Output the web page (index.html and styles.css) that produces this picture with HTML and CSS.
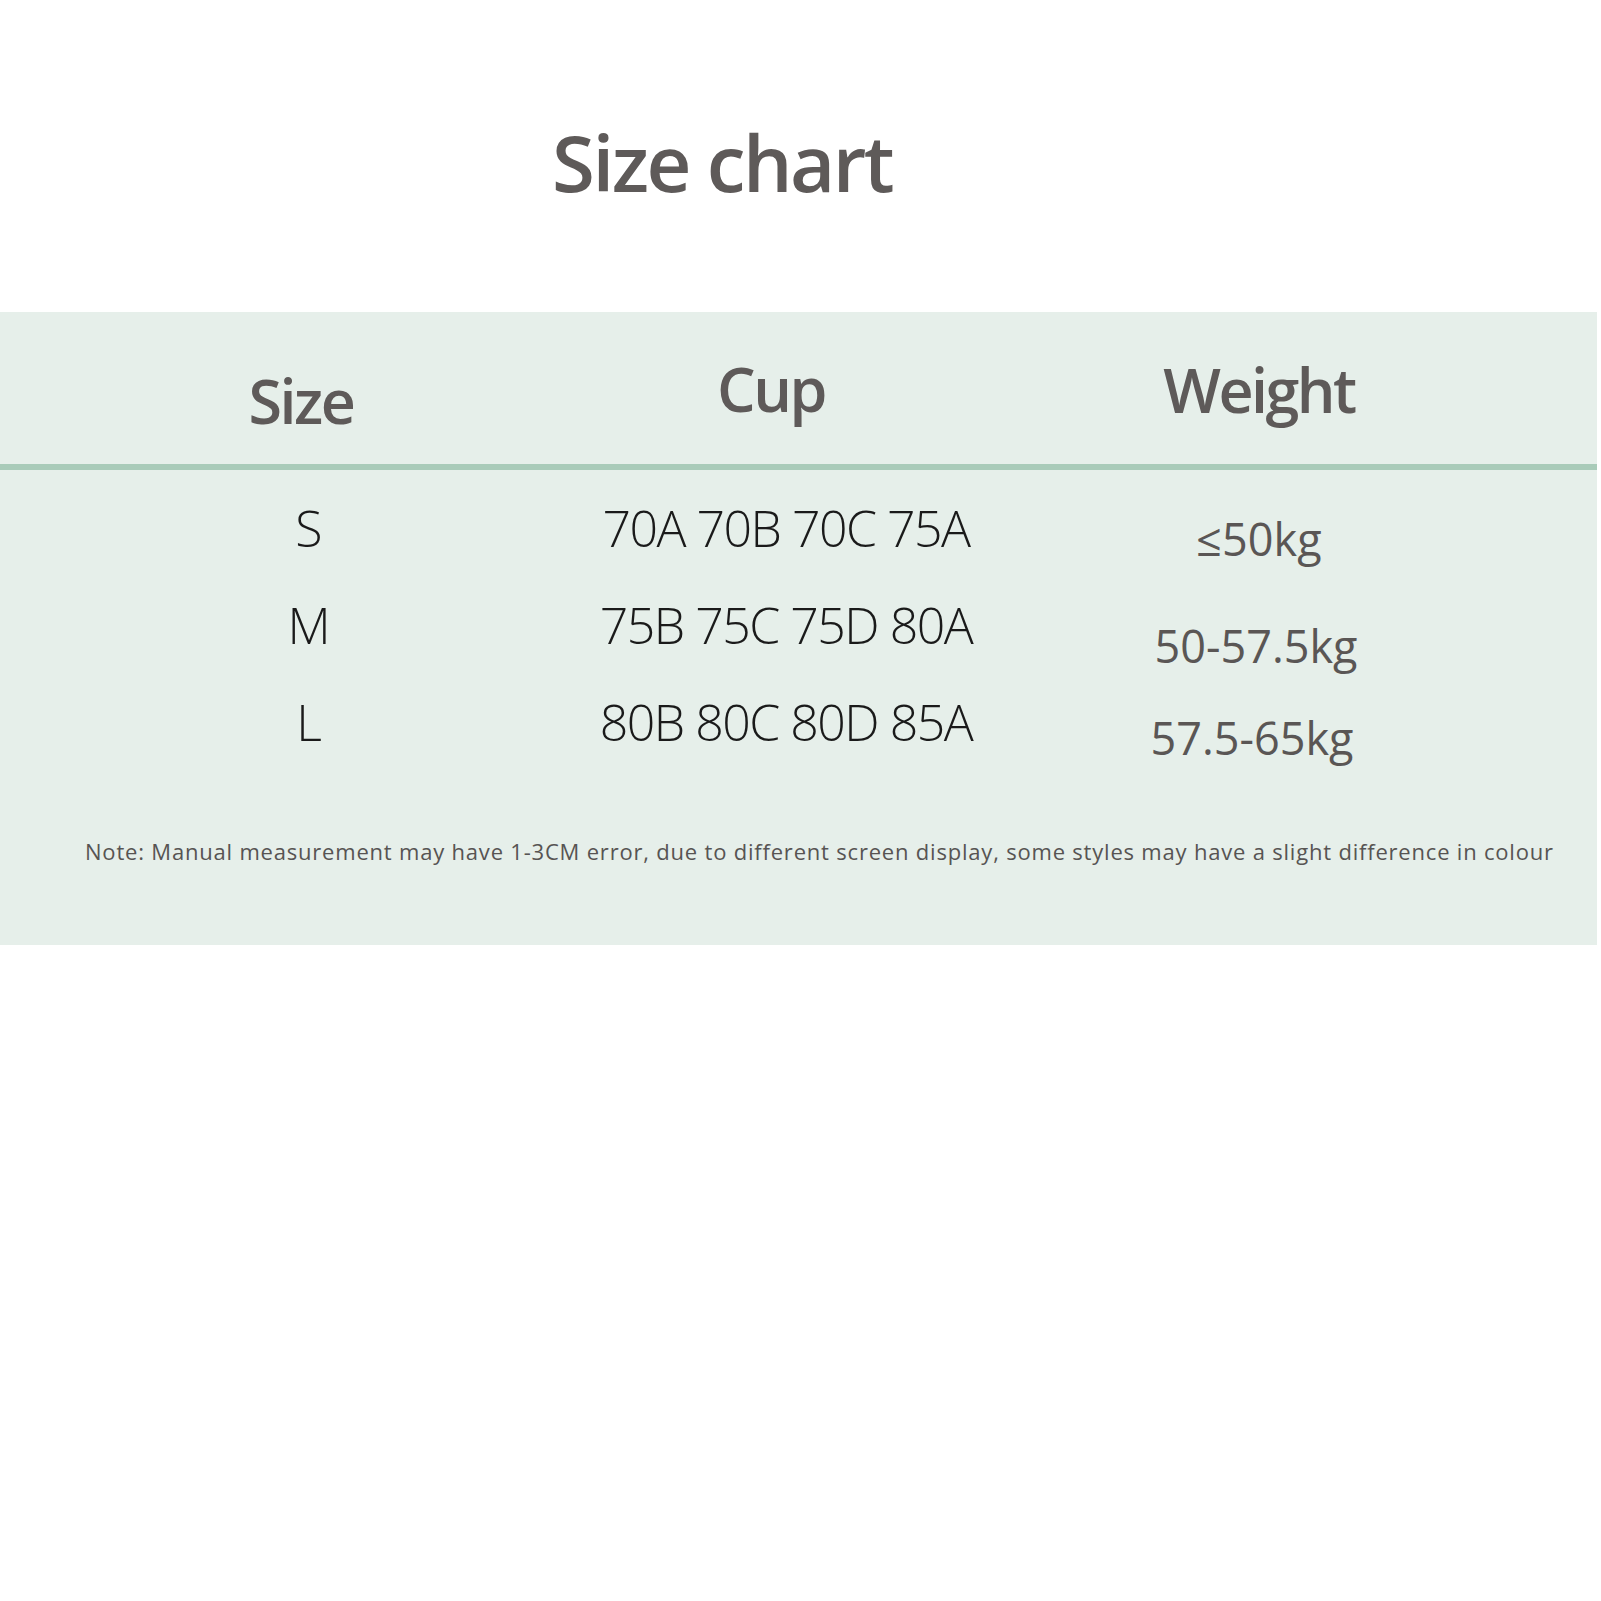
FILE: index.html
```html
<!DOCTYPE html>
<html lang="en">
<head>
<meta charset="utf-8">
<title>Size chart</title>
<link rel="stylesheet" href="styles.css">
</head>
<body>
<div class="page">
  <h1 class="title">Size chart</h1>
  <section class="panel">
    <div class="grid head">
      <div class="cell hsize">Size</div>
      <div class="cell hcup">Cup</div>
      <div class="cell hweight">Weight</div>
    </div>
    <div class="grid body">
      <div class="cell size">S</div>
      <div class="cell cup">70A 70B 70C 75A</div>
      <div class="cell weight w1">≤50kg</div>

      <div class="cell size">M</div>
      <div class="cell cup">75B 75C 75D 80A</div>
      <div class="cell weight w2">50-57.5kg</div>

      <div class="cell size">L</div>
      <div class="cell cup">80B 80C 80D 85A</div>
      <div class="cell weight w3">57.5-65kg</div>
    </div>
    <p class="note">Note: Manual measurement may have 1-3CM error, due to different screen display, some styles may have a slight difference in colour</p>
  </section>
</div>
</body>
</html>
```

FILE: styles.css
```css
html, body {
  margin: 0;
  padding: 0;
  background: #ffffff;
}

.page {
  width: 1601px;
  min-height: 1601px;
  font-family: "Open Sans", "Noto Sans", "DejaVu Sans", sans-serif;
  padding-top: 112px;
  box-sizing: border-box;
}

.title {
  margin: 0;
  padding-left: 552px;
  font-size: 78px;
  line-height: 100px;
  font-weight: 600;
  letter-spacing: -2.5px;
  color: #5e5a59;
}

.panel {
  margin-top: 100px;
  width: 1597px;
  background: #e6efea;
  padding-bottom: 79px;
}

.grid {
  display: grid;
  grid-template-columns: 618px 336px 604px;
}

.cell {
  display: flex;
  justify-content: center;
  align-items: flex-start;
  white-space: nowrap;
}

.head {
  height: 152px;
  border-bottom: 6px solid #a9cbb9;
  box-sizing: content-box;
}

.head .cell {
  font-size: 61px;
  line-height: 80px;
  font-weight: 600;
  color: #5e5a59;
  letter-spacing: -2.5px;
}

.hsize { padding-top: 49px; padding-right: 16px; }
.hcup { padding-top: 37px; padding-right: 30px; }
.hweight { padding-top: 38px; padding-left: 6px; }

.body {
  padding-top: 10px;
  grid-auto-rows: 97px;
}

.size, .cup {
  font-size: 50px;
  line-height: 97px;
  font-weight: 300;
  color: #1a1a1a;
}

.cup {
  letter-spacing: -1.5px;
}

.weight {
  font-size: 45px;
  line-height: 97px;
  font-weight: 400;
  color: #5a5655;
}

.w1 { padding-top: 10px; padding-left: 6px; }
.w2 { padding-top: 20px; }
.w3 { padding-top: 15px; padding-right: 8px; }

.note {
  margin: 65px 0 0 0;
  padding-left: 85px;
  font-size: 22px;
  line-height: 30px;
  letter-spacing: 0.8px;
  color: #575453;
  white-space: nowrap;
}
```
